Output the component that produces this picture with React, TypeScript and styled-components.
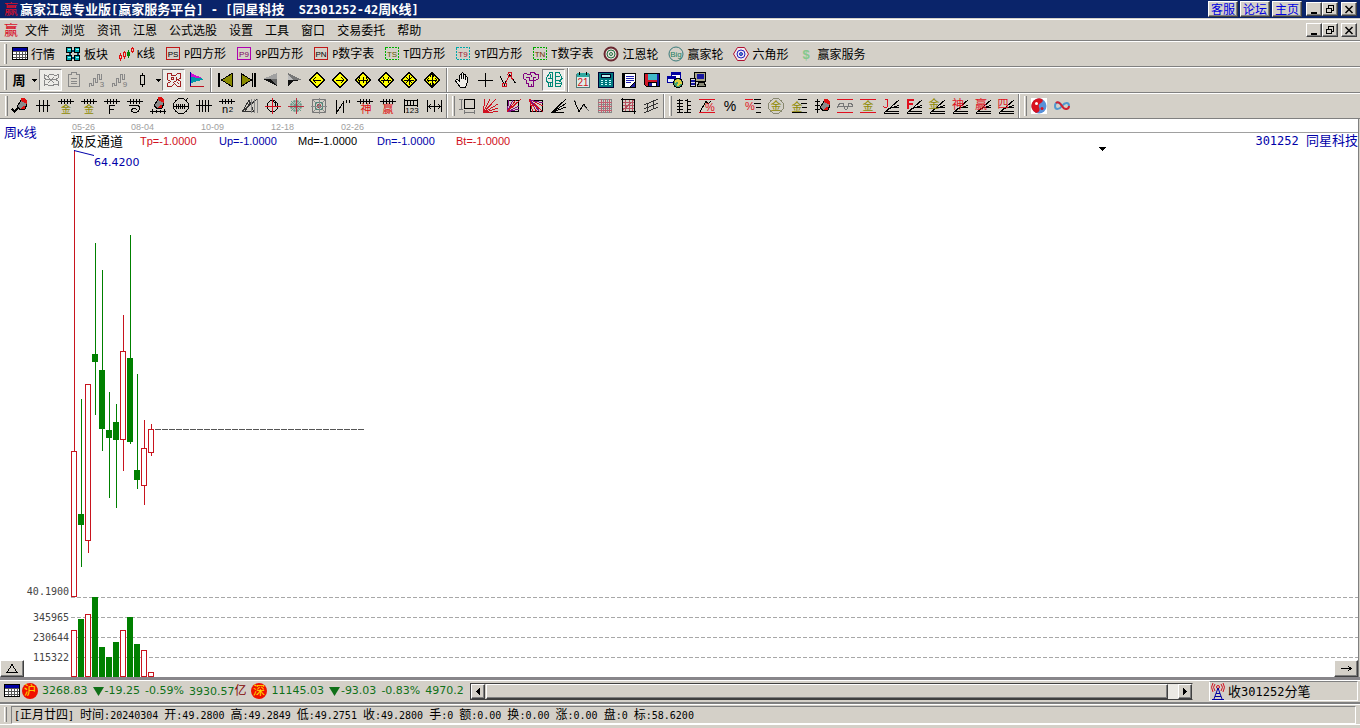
import React, { ReactNode } from "react";
import styled, { createGlobalStyle, css } from "styled-components";

const FACE = "#d4d0c8";
const SHADOW = "#808080";
const NAVY = "#0a246a";
const BLUE = "#0000a8";
const RED = "#c8141e";
const GREEN = "#008000";
const OLIVE = "#8f8a00";

const CJK = `"Noto Sans CJK SC", sans-serif`;
const MONO = `"DejaVu Sans Mono", "Noto Sans CJK SC", monospace`;

const GlobalStyle = createGlobalStyle`
  *, *::before { box-sizing: border-box; }
  body { margin: 0; background: ${FACE}; }
  button { font: inherit; color: inherit; }
`;

/* ---------- text ---------- */

const Half = styled.span<{ $size: number }>`
  font-family: ${MONO};
  font-size: ${(p) => p.$size}px;
`;

/* Sets half-width runs in the monospaced face, beside full-width characters. */
function Mixed({ text, size = 10 }: { text: string; size?: number }) {
  return (
    <>
      {text.split(/([\x20-\x7e]+)/).map((run, i) =>
        i % 2 ? (
          <Half key={i} $size={size}>
            {run}
          </Half>
        ) : (
          run
        )
      )}
    </>
  );
}

/* ---------- shared chrome ---------- */

const raised = css`
  background: ${FACE};
  border: 1px solid;
  border-color: #fff #404040 #404040 #fff;
  box-shadow: inset -1px -1px 0 ${SHADOW};
`;

const sunken = css`
  border: 1px solid;
  border-color: ${SHADOW} #fff #fff ${SHADOW};
`;

const Page = styled.div`
  min-height: 100vh;
  display: flex;
  flex-direction: column;
  background: ${FACE};
  font-family: ${CJK};
  font-size: 12px;
  line-height: 16px;
  color: #000;
  overflow: hidden;
`;

const TitleBar = styled.header`
  height: 18px;
  display: flex;
  align-items: center;
  padding: 0 3px 0 4px;
  background: ${NAVY};
  color: #fff;
`;

const TitleText = styled.h1`
  flex: 1;
  margin: 0;
  padding-left: 1px;
  font-size: 13px;
  line-height: 18px;
  font-weight: 700;
  white-space: pre;
  overflow: hidden;
`;

const TitleLinks = styled.nav`
  display: flex;
  gap: 2px;
  margin-right: 4px;
`;

const TitleLink = styled.a`
  ${raised}
  width: 30px;
  height: 16px;
  text-align: center;
  font-size: 12px;
  line-height: 14px;
  color: #0000e0;
  text-decoration: none;
`;

const WindowControls = styled.div`
  display: flex;
  gap: 0;
  & > :last-child {
    margin-left: 3px;
  }
`;

const WindowButton = styled.button`
  ${raised}
  width: 16px;
  height: 14px;
  padding: 0;
  display: grid;
  place-items: center;
`;

const Band = styled.div`
  display: flex;
  align-items: center;
  border-top: 1px solid #fff;
  border-bottom: 1px solid ${SHADOW};
`;

const MenuBar = styled(Band)`
  margin-top: 1px;
  height: 22px;
  padding: 0 3px 0 4px;
`;

const MenuItem = styled.button`
  border: 0;
  background: none;
  padding: 0 6px;
  line-height: 20px;
`;

const Spacer = styled.div`
  flex: 1;
`;

const ToolRow = styled(Band)`
  height: 26px;
`;

const Group = styled.div<{ $pad?: number; $last?: boolean }>`
  height: 24px;
  display: flex;
  align-items: center;
  padding: 0 1px 0 ${(p) => (p.$pad ?? 8) - 7}px;
  border-right: ${(p) => (p.$last ? "0" : `1px solid ${SHADOW}`)};
  &::before {
    content: "";
    width: 3px;
    height: 20px;
    margin: 0 0 0 4px;
    border-left: 1px solid #fff;
    border-right: 1px solid ${SHADOW};
  }
  & + & {
    box-shadow: inset 1px 0 0 #fff;
  }
`;

const Divider = styled.span<{ $width: number }>`
  width: ${(p) => p.$width}px;
  height: 24px;
  display: flex;
  justify-content: center;
  &::before {
    content: "";
    width: 2px;
    border-left: 1px solid ${SHADOW};
    border-right: 1px solid #fff;
  }
`;

const LabelButton = styled.button`
  border: 0;
  background: none;
  padding: 0 5px;
  display: flex;
  align-items: center;
  gap: 3px;
  white-space: nowrap;
`;

const IconButton = styled.button<{ $on?: boolean }>`
  width: 23px;
  height: 22px;
  padding: 0;
  display: grid;
  place-items: center;
  border: 1px solid transparent;
  background: none;
  ${(p) =>
    p.$on &&
    css`
      background: #ecebe7;
      border-color: ${SHADOW} #fff #fff ${SHADOW};
    `}
`;

const DropButton = styled.button<{ $width: number }>`
  width: ${(p) => p.$width}px;
  height: 22px;
  padding: 0;
  border: 0;
  background: none;
  display: grid;
  place-items: center;
`;

/* ---------- icon drawing ---------- */

const Svg = ({ children, w = 18, h = 18 }: { children: ReactNode; w?: number; h?: number }) => (
  <svg
    width={w}
    height={h}
    viewBox={`0 0 ${w} ${h}`}
    fill="none"
    stroke="#000"
    strokeWidth={1}
    shapeRendering="crispEdges"
    aria-hidden="true"
  >
    {children}
  </svg>
);

const L = ({ d, c = "#000", f = "none", w = 1 }: { d: string; c?: string; f?: string; w?: number }) => (
  <path d={d} stroke={c} fill={f} strokeWidth={w} />
);

const T = ({ x, y, s = 10, c = "#000", children, b }: { x: number; y: number; s?: number; c?: string; b?: boolean; children: string }) => (
  <text x={x} y={y} fontSize={s} fill={c} stroke="none" textAnchor="middle" fontWeight={b ? 700 : 400} fontFamily={`"Liberation Sans", ${CJK}`}>
    {children}
  </text>
);

const Caret = () => (
  <Svg w={5} h={3}>
    <path d="M0 0H5L2.5 3Z" fill="#000" stroke="none" />
  </Svg>
);

const Scale = () => <L d="M1 4.5H17M4.5 2V7M7.5 2V7M10.5 2V7M13.5 2V7" />;

const Pen = ({ x = 0, y = 0 }: { x?: number; y?: number }) => (
  <g transform={`translate(${x} ${y})`}>
    <path d="M10 2L13 3L16 8L15 12L10 13L6 11Z" fill="#8a8a8a" stroke="none" />
    <path d="M10 1H13L16 4V7L10 4Z" fill="#e01010" stroke="none" />
    <path d="M13 9L15 11L11 13L9 12Z" fill="#e01010" stroke="none" />
    <path d="M10 3L6 10L10 13L14 12L16 7" stroke="#000" />
  </g>
);

const Fan = () => <L d="M2 16L17 3M4 14.5H17M6 12L17 8.5M2 16.5H17M8 10.5H17" />;
const RedBars = () => <L c="#e01020" d="M1 2.5H17M1 15.5H17" />;

const Diamond = ({ children }: { children: ReactNode }) => (
  <Svg>
    <path d="M9 1.5L16.5 9L9 16.5L1.5 9Z" fill="#ffff00" stroke="#000" />
    {children}
  </Svg>
);

const Tag = ({ text, color, ink = "#000", dash }: { text: string; color: string; ink?: string; dash?: boolean }) => (
  <Svg w={16} h={16}>
    <rect x="1.5" y="1.5" width="13" height="12" stroke={color} strokeDasharray={dash ? "2 1" : undefined} />
    <T x={8} y={11} s={8} c={ink}>
      {text}
    </T>
  </Svg>
);

const TableIcon = () => (
  <Svg w={16} h={16}>
    <rect x="0.5" y="1.5" width="15" height="12" fill="#fff" />
    <rect x="1" y="2" width="14" height="3" fill="#0000a0" stroke="none" />
    <L d="M1 5.5H15M1 8.5H15M1 11H15M4.5 5V13M7.5 5V13M10.5 5V13M13 5V13" c="#555" />
  </Svg>
);

const BrandIcon = () => (
  <Svg w={15} h={16}>
    <T x={7} y={13} s={14} c="#d8102a">
      赢
    </T>
  </Svg>
);

/* ---------- toolbar contents ---------- */

const labelled: [string, ReactNode][] = [
  ["行情", <TableIcon />],
  [
    "板块",
    <Svg w={16} h={16}>
      {[
        [1.5, 1.5],
        [9.5, 1.5],
        [1.5, 9.5],
        [9.5, 9.5],
      ].map(([x, y]) => (
        <g key={`${x}-${y}`}>
          <rect x={x} y={y} width="5" height="5" fill="#00a8b0" />
          <L d={`M${x + 1} ${y + 2}H${x + 4}`} c="#8ff" />
        </g>
      ))}
      <L d="M7 4.5H9M7 12H9M4.5 7V9M12.5 7V9" c="#046" w={2} />
    </Svg>,
  ],
  [
    "K线",
    <Svg w={16} h={16}>
      <L c="#e01010" d="M2.5 7V15M6.5 5V13M14.5 1V7" />
      <rect x="1.5" y="9.5" width="2" height="3" fill={FACE} stroke="#e01010" />
      <rect x="5.5" y="6.5" width="2" height="4" fill={FACE} stroke="#e01010" />
      <L c={GREEN} d="M10.5 4V12M9.5 6V10M11.5 6V10" />
      <rect x="13.5" y="2.5" width="2" height="3" fill={FACE} stroke="#e01010" />
    </Svg>,
  ],
  ["P四方形", <Tag text="PS" color="#c01818" />],
  ["9P四方形", <Tag text="P9" color="#b000b0" ink="#800060" />],
  ["P数字表", <Tag text="PN" color="#c01818" />],
  ["T四方形", <Tag text="TS" color="#00b000" ink="#5a5a00" dash />],
  ["9T四方形", <Tag text="T9" color="#00a8a8" ink="#a01830" dash />],
  ["T数字表", <Tag text="TN" color="#00a800" ink="#703000" dash />],
  [
    "江恩轮",
    <Svg w={16} h={16}>
      <g shapeRendering="auto">
        <circle cx="8" cy="8" r="6.5" stroke="#6a2830" strokeWidth={2} fill="#e8e0dc" />
        <circle cx="8" cy="8" r="4" stroke="#207040" />
        <circle cx="8" cy="8" r="1.5" stroke="#207040" />
      </g>
    </Svg>,
  ],
  [
    "赢家轮",
    <Svg w={16} h={16}>
      <circle cx="8" cy="8" r="7" stroke="#3a7a7a" shapeRendering="auto" />
      <T x={8} y={11} s={8} c="#1a8060">
        Big
      </T>
    </Svg>,
  ],
  [
    "六角形",
    <Svg w={16} h={16}>
      <g shapeRendering="auto">
        <path d="M4.5 1.5H11.5L15.5 8L11.5 14.5H4.5L0.5 8Z" stroke="#b01030" fill="#f0e8f0" />
        <circle cx="8" cy="8" r="4" stroke="#2020c0" />
        <circle cx="8" cy="8" r="1.5" stroke="#2020c0" fill="#5aa0c0" />
      </g>
    </Svg>,
  ],
  [
    "赢家服务",
    <Svg w={16} h={16}>
      <T x={8} y={13} s={13} c="#84c88c" b>
        $
      </T>
    </Svg>,
  ],
];

type Tool = [string, ReactNode, boolean?];

const periodTools: Tool[] = [
  [
    "叠加",
    <Svg>
      <L c="#888" d="M2 3.5L6 5.5L8 3H11L13 5L16 3.5V7L14 8.5L16 10V14L13 13L11 14.5H7L5 13L2 14.5V10L4 8.5L2 7ZM4 8.5H14M6 6L12 12M12 6L6 12" />
    </Svg>,
    true,
  ],
  [
    "信息",
    <Svg>
      <L c="#888" d="M3.5 3.5H6.5V1.5H11.5V3.5H14.5V15.5H3.5ZM6 7.5H12M6 10.5H12M6 12.5H12" />
    </Svg>,
  ],
  [
    "三分",
    <Svg>
      <L c="#888" d="M1.5 16V12.5H3.5V14.5H5.5V7.5H7.5V11.5H9.5V3.5H11.5V8.5H13.5V3" />
      <T x={14} y={16} s={8} c="#777">
        3
      </T>
    </Svg>,
  ],
  [
    "九分",
    <Svg>
      <L c="#888" d="M1.5 16V12.5H3.5V14.5H5.5V7.5H7.5V11.5H9.5V3.5H11.5V8.5H13.5V3" />
      <T x={14} y={16} s={8} c="#777">
        9
      </T>
    </Svg>,
  ],
  [
    "K线样式",
    <Svg>
      <L d="M8.5 2V16" />
      <rect x="6.5" y="4.5" width="4" height="9" fill={FACE} />
    </Svg>,
  ],
];

const viewTools: Tool[] = [
  [
    "图形",
    <Svg>
      <L c="#a02020" d="M2.5 2.5H6.5V4.5H10.5L12.5 2.5H15.5V7.5L13 8.5L15.5 10.5V15.5H12.5L9.5 12.5L6.5 15.5H2.5V12.5L5.5 10.5L2.5 8.5ZM6.5 6.5H8.5V8.5H6.5ZM11.5 5.5V9.5L8.5 11.5M12.5 11.5L14 13" />
    </Svg>,
    true,
  ],
  [
    "旗帜",
    <Svg>
      <path d="M3 2L14 7L3 12Z" fill="#d010d0" stroke="none" />
      <path d="M3 6L17 8L3 12Z" fill="#0098a8" stroke="none" />
      <L c="#0000a0" d="M2.5 1V16" />
      <L c="#c01020" d="M2 15.5H16" />
    </Svg>,
  ],
];

const navTools: Tool[] = [
  ["首页", <Svg><path d="M5.5 9L16 2.5V15.5Z" fill="#8a8a00" /><L d="M3 2V16" w={2} /></Svg>],
  ["末页", <Svg><path d="M12.5 9L2 2.5V15.5Z" fill="#8a8a00" /><L d="M13.5 2V16" /><L d="M16 2V16" w={2} /></Svg>],
  ["后退", <Svg><path d="M1 8L15 2V8Z" fill="#a0a0a0" stroke="none" /><path d="M1 8H15V15Z" fill="#111" stroke="none" /><path d="M9 8H15V15Z" fill="#666" stroke="none" /></Svg>],
  ["前进", <Svg><path d="M17 9L3 2V9Z" fill="#777" stroke="none" /><path d="M17 9H3V16L8 10Z" fill="#111" stroke="none" /><path d="M3 4L8 9H3Z" fill="#bbb" stroke="none" /></Svg>],
  ["左移", <Diamond><L d="M5 9H13M8 6L5 9L8 12" /></Diamond>],
  ["右移", <Diamond><L d="M5 9H13M10 6L13 9L10 12" /></Diamond>],
  ["展开", <Diamond><L d="M4 9H14M6 6.5L4 9L6 11.5M12 6.5L14 9L12 11.5M9 6V12" /></Diamond>],
  ["收缩", <Diamond><L d="M4 9H14M6 6.5L8 9L6 11.5M12 6.5L10 9L12 11.5" /></Diamond>],
  ["缩小", <Diamond><L d="M4 9H14M9 4V14M6 6L12 12M12 6L6 12" /></Diamond>],
  ["放大", <Diamond><L d="M4 9H14M9 3V15M7 5.5L9 3L11 5.5M7 12.5L9 15L11 12.5M6 7L4 9L6 11M12 7L14 9L12 11" /></Diamond>],
];

const pointerTools: Tool[] = [
  [
    "手形",
    <Svg>
      <path d="M6.5 10V4.5Q7.5 2.5 8.5 4.5V8V2.5Q9.5 1 10.5 2.5V8V4Q11.5 3 12.5 4V9V6Q13.5 5 14.5 6.5V11L12.5 16.5H7.5L3 10.5Q2 8.5 4 8.5Z" fill="#efede8" />
    </Svg>,
  ],
  ["十字", <Svg><L d="M9.5 2V16M2 9.5H17" /></Svg>],
  [
    "折线",
    <Svg>
      <L d="M1 5L5.5 13.5L10.5 4L16.5 12" />
      <circle cx="5.5" cy="14" r="2" stroke="#d01020" />
      <circle cx="11" cy="3.5" r="2" stroke="#d01020" />
      <L c="#d01020" d="M7 11L10 5M12 6L14 9" />
    </Svg>,
  ],
  [
    "区域",
    <Svg>
      <L c="#800080" d="M1.5 3.5L4 2L6 3.5H8L9 1.5H12L13.5 3L16.5 4V7.5L13.5 9.5H11.5V15.5H6.5V12.5H4.5V9.5L1.5 7.5ZM4 6.5H7V9.5H11V6.5H14M9.5 12.5V15M9.5 4V6" />
    </Svg>,
  ],
  [
    "智能",
    <Svg>
      <L c="#008878" d="M3.5 15.5H7.5V1.5L4.5 2L2 6L1.5 10L3.5 12ZM10.5 1.5V15.5H15L17 12L14.5 10L17 7.5L14.5 2ZM3 7.5H7M2 11.5H7M11 5.5H15M11 9.5H14M11 12.5H16M5.5 3V7M5.5 11V15" />
    </Svg>,
    true,
  ],
];

const appTools: Tool[] = [
  [
    "日历",
    <Svg>
      <rect x="2.5" y="3.5" width="13" height="13" fill="#dfeeea" stroke="#507878" />
      <rect x="3" y="2" width="12" height="4" fill="#30a8a0" stroke="none" />
      <L d="M5.5 1V4M12.5 1V4" />
      <T x={9} y={15} s={10} c="#d01020">
        21
      </T>
    </Svg>,
  ],
  [
    "计算器",
    <Svg>
      <rect x="1.5" y="1.5" width="15" height="15" fill="#007880" stroke="#003" />
      <rect x="4.5" y="3.5" width="9" height="3" fill="#b8f0f0" stroke="#002" />
      {[9.5, 11.5, 13.5].map((y) => (
        <path key={y} d={`M4 ${y}H14`} stroke="#c8ffff" strokeDasharray="2 2" />
      ))}
    </Svg>,
  ],
  [
    "笔记",
    <Svg>
      <path d="M2.5 2.5H15.5V16.5H2.5Z" fill="#fff" />
      <L d="M4 3V16" w={2} />
      <L c="#2020b0" d="M6 5.5H14M6 7.5H14M6 9.5H14M6 11.5H11" />
      <path d="M15 11V16H10Z" fill="#2020a0" stroke="#000" />
    </Svg>,
  ],
  [
    "保存",
    <Svg>
      <path d="M1.5 2.5H16.5V15.5H3.5L1.5 13.5Z" fill="#d01828" />
      <rect x="5" y="3" width="9" height="6" fill="#40b8c8" stroke="none" />
      <rect x="5.5" y="11.5" width="8" height="4" fill="#fff" stroke="#000" />
      <path d="M6 12H9V15H6ZM14 3H16V15H14Z" fill="#1818a0" stroke="none" />
    </Svg>,
  ],
  [
    "网络",
    <Svg>
      <rect x="5.5" y="1.5" width="9" height="7" fill="#fff" stroke="#0000a0" />
      <rect x="1.5" y="5.5" width="8" height="6" fill="#e8f0ff" stroke="#0000a0" />
      <L c="#0000a0" d="M6 3H14M2 7H9" w={2} />
      <circle cx="12" cy="12" r="4.5" fill="#40a070" />
      <L c="#e0d040" d="M9 11L12 9L14 12L11 15M14 9L15 13" w={2} />
    </Svg>,
  ],
  [
    "终端",
    <Svg>
      <rect x="5.5" y="1.5" width="11" height="9" fill="#a8a488" />
      <rect x="8" y="3" width="7" height="5" fill="#1818a0" stroke="none" />
      <path d="M9.5 11.5H15.5L16.5 15.5H8.5Z" fill="#8a8a78" />
      <rect x="1.5" y="7.5" width="5" height="8" fill="#d8d8e8" />
      <L c="#1818a0" d="M2 10H6M2 13H6" w={2} />
    </Svg>,
  ],
];

const drawTools: Tool[] = [
  ["画笔", <Svg><Pen /><L d="M1 12L3.5 14.5L7 11" w={2} /></Svg>],
  ["等分", <Svg><L d="M2 8.5H16M5.5 3V15M9.5 3V15M13.5 3V15" /></Svg>],
  ["黄金尺", <Svg><Scale /><T x={9} y={16} c={OLIVE}>金</T></Svg>],
  ["黄金段", <Svg><Scale /><T x={9} y={16} c={OLIVE}>金</T></Svg>],
  ["斐波尺", <Svg><Scale /><L d="M6.5 17V8.5H12M7 12.5H11" /></Svg>],
  ["螺旋", <Svg><Scale /><L d="M3 8.5H12Q15 11 12.5 14Q9 17 6 14.5Q5 12 8 11Q11 11 10 13.5" /></Svg>],
  ["标尺", <Svg><Pen x={-1} y={-1} /><L d="M1 14.5H17M3.5 12V17M7.5 13V16M11.5 13V16M15.5 12V17" /></Svg>],
  ["圆尺", <Svg><circle cx="9" cy="9" r="7.5" /><L d="M1 9.5H17M4.5 7V12M6.5 7V12M8.5 7V12M10.5 7V12M12.5 7V12M14 3L16 1" /></Svg>],
  ["四分", <Svg><L d="M1 8.5H17M4.5 3V15M7.5 3V15M10.5 3V15M13.5 3V15" /></Svg>],
  ["平方", <Svg><Scale /><T x={7} y={16} s={11}>n</T><T x={13} y={15} s={8}>2</T></Svg>],
  ["三角", <Svg><L c="#333" d="M1.5 14.5L8 3L13 15ZM1.5 14.5L16 2M4 14L9 6" /><L c="#888" d="M10.5 2V16M13.5 2V16M16.5 2V16" /></Svg>],
  ["圆周", <Svg><circle cx="8.5" cy="9" r="5.5" /><L d="M8 5Q12 4 12 9" /><L c="#d01020" d="M1 9.5H17M8.5 1V17" /></Svg>],
  [
    "星形",
    <Svg>
      <g shapeRendering="auto">
        <circle cx="9" cy="9" r="5" stroke="#5a9a8a" />
        <L c="#6a9a8a" d="M4 4L14 14M14 4L4 14M3 7L15 11M15 7L3 11M7 3L11 15M11 3L7 15" />
      </g>
      <L c="#b83040" d="M1 9.5H17M9.5 1V17" />
    </Svg>,
  ],
  [
    "蛛网",
    <Svg>
      <rect x="2.5" y="2.5" width="13" height="13" stroke="#777" />
      <rect x="5.5" y="5.5" width="7" height="7" stroke="#4a8a7a" />
      <circle cx="9" cy="9" r="2" stroke="#b83040" />
      <L c="#888" d="M2 2L16 16M16 2L2 16M9.5 1V17M1 9.5H17" />
    </Svg>,
  ],
  ["波段", <Svg><L d="M3.5 3V16L10.5 5V16M13.5 3V6M16.5 3V6" /></Svg>],
  ["神奇尺", <Svg><Scale /><T x={10} y={16} s={11} c="#e01010">神</T></Svg>],
  ["赢家尺", <Svg><Scale /><T x={9} y={16} s={11} c="#e01010">赢</T></Svg>],
  ["数字尺", <Svg><L d="M2.5 2V16M2 3.5H16M15.5 2V10M2 8.5H16M5.5 4V8M8.5 4V8M11.5 4V8" /><T x={10} y={16} s={8}>123</T></Svg>],
  ["间距", <Svg><L d="M2.5 3V15M9.5 3V15M16.5 3V15M3 9.5H16M6 7L4 9.5L6 12M13 7L15 9.5L13 12" /></Svg>],
];

const gannTools: Tool[] = [
  ["量度框", <Svg><rect x="6.5" y="2.5" width="10" height="9" /><L c="#777" d="M1 2.5H5M1 12.5H5M3.5 3V12M6.5 13V17M16.5 13V17M7 15.5H16" /></Svg>],
  ["扇形线", <Svg><L c="#d01020" d="M2 16L4 2M2 16L9 2M2 16L15 2M2 16L17 7M2 16L17 11M2 16L17 14.5" /></Svg>],
  ["江恩箱", <Svg><rect x="3.5" y="3.5" width="11" height="11" /><L c="#801080" d="M3 15L5 3M3 15L9 3M3 15L15 9M3 15L15 12" /><L c="#d01020" d="M3 15L17 2M3 15L12 3" /></Svg>],
  ["下降箱", <Svg><rect x="3.5" y="3.5" width="12" height="11" /><L c="#d01020" d="M2 2L16 15M2 2L10 15M2 2L6 15M2 2L16 9" /><L c="#801080" d="M3 3L13 15M3 3L16 6" /></Svg>],
  ["速度线", <Svg><L d="M1.5 15.5L16 2M1.5 15.5L16 6.5M1.5 15.5L16 10M2 15.5H14" /></Svg>],
  ["波浪", <Svg><L d="M1 3L6 14.5L11 7L14 12" /><L c="#666" d="M1 3L3 5M10 8L16 14" /></Svg>],
  ["网格", <Svg><L c="#888" d="M2.5 2V16M7.5 2V16M11.5 2V16M15.5 2V16M2 2.5H16M2 7.5H16M2 11.5H16M2 15.5H16" /><L c="#c06070" d="M5.5 2V16M9.5 2V16M13.5 2V16M2 5.5H16M2 9.5H16M2 13.5H16" /></Svg>],
  ["坐标格", <Svg><L c="#b85060" d="M6.5 3V14M10.5 3V14M13.5 3V14M4 5.5H16M4 8.5H16M4 11.5H16M3 14L15 3" /><L d="M2 2.5H16M3.5 1V15M3 14.5H17M15.5 3V17" /></Svg>],
  ["平行线", <Svg><L d="M2 8L16 2M2 12L16 6M2 16L16 10M5.5 6V15M11.5 3V12" c="#333" /></Svg>],
];

const ratioTools: Tool[] = [
  ["刻度", <Svg><L d="M4.5 2V16M12.5 2V16M2 3.5H8M2 6.5H8M2 9.5H8M2 12.5H8M2 15.5H8M10 3.5H12M13 4.5H16M13 8.5H16M13 12.5H16M9 15.5H16" /></Svg>],
  ["百分波", <Svg><RedBars /><L d="M2 15L8 4L10 7L13 4" /><T x={12} y={14} s={11} c="#e01020">%</T></Svg>],
  ["百分比", <Svg><T x={9} y={14} s={14}>%</T></Svg>],
  ["百分线", <Svg><L c="#e01020" d="M1 2.5H9" /><L d="M10 2.5H17M10 6.5H17M12 10.5H17M12 15.5H17" /><T x={6} y={13} s={11} c="#e01020">%</T></Svg>],
  ["黄金圆", <Svg><circle cx="9" cy="9" r="7.5" stroke="#888870" /><T x={9} y={13} s={11} c={OLIVE}>金</T></Svg>],
  ["黄金线", <Svg><L d="M8 2.5H17M11 6.5H17M12 10.5H17M2 15.5H17" /><T x={7} y={14} s={11} c={OLIVE}>金</T></Svg>],
  ["刻度笔", <Svg><L d="M4.5 2V16M2 4.5H7M2 8.5H7M2 12.5H7" /><Pen x={1} y={1} /></Svg>],
  ["震荡线", <Svg><RedBars /><L c="#777" d="M1 11L4 6L7 6L9 12H11L13 6H15L17 9M1 9.5H17" /></Svg>],
  ["黄金带", <Svg><RedBars /><T x={9} y={13} s={11} c={OLIVE}>金</T></Svg>],
  ["J线", <Svg><Fan /><L c="#e01020" d="M1.5 9.5L2.5 10.5H4.5L5.5 9.5V2.5H3" /></Svg>],
  ["F线", <Svg><Fan /><L c="#e01020" d="M3 12V3H9M4 7H8" w={2} /></Svg>],
  ["金线", <Svg><Fan /><T x={6} y={11} s={11} c={OLIVE}>金</T></Svg>],
  ["神线", <Svg><Fan /><T x={7} y={12} s={12} c="#e01020">神</T></Svg>],
  ["赢线", <Svg><Fan /><T x={7} y={12} s={12} c="#e01020">赢</T></Svg>],
  ["四线", <Svg><Fan /><T x={6} y={11} s={11} c="#e01020">四</T></Svg>],
];

const extraTools: Tool[] = [
  [
    "太极",
    <Svg>
      <rect x="1" y="1" width="16" height="16" fill="#fff" stroke="none" />
      <g shapeRendering="auto" stroke="none">
        <circle cx="9" cy="9" r="7.5" fill="#5890d8" />
        <path d="M12 2A7.5 7.5 0 1 0 6 16Q11 15 9 10Q8 7 11 6Q14 4 12 2Z" fill="#d81020" />
        <circle cx="6.5" cy="6.5" r="1.5" fill="#fff" />
        <circle cx="12" cy="11.5" r="1.5" fill="#d81020" />
      </g>
    </Svg>,
  ],
  [
    "无穷",
    <Svg>
      <g shapeRendering="auto" strokeWidth={2}>
        <path d="M9 9C6 4 2 5 2 9C2 13 6 13 9 9C12 5 16 5 16 9" stroke="#5098d0" />
        <path d="M3 6C5 4 7 6 9 9C12 14 16 12 16 9" stroke="#d02030" />
      </g>
    </Svg>,
  ],
];

const Tools = ({ items }: { items: Tool[] }) => (
  <>
    {items.map(([name, icon, on]) => (
      <IconButton key={name} type="button" aria-label={name} $on={on}>
        {icon}
      </IconButton>
    ))}
  </>
);

function Controls() {
  return (
    <WindowControls>
      <WindowButton type="button" aria-label="最小化">
        <Svg w={10} h={9}><L d="M2 8H8" w={2} /></Svg>
      </WindowButton>
      <WindowButton type="button" aria-label="还原">
        <Svg w={10} h={10}><L d="M3.5 4V1H8.5V6H6.5M3 1.5H9M1.5 4V8.5H6.5V4M1 4.5H7" /></Svg>
      </WindowButton>
      <WindowButton type="button" aria-label="关闭">
        <Svg w={10} h={9}><g shapeRendering="auto"><L d="M1.5 1L8.5 8M8.5 1L1.5 8" w={1.5} /></g></Svg>
      </WindowButton>
    </WindowControls>
  );
}

/* ---------- chart ---------- */

const ChartPanel = styled.main`
  position: relative;
  flex: 1;
  display: flex;
  margin-right: 1px;
  background: #fff;
  border-right: 1px solid ${SHADOW};
`;

const Gutter = styled.div`
  width: 71px;
  display: flex;
  flex-direction: column;
  align-items: flex-end;
  padding: 5px 2px 9px 4px;
  font-family: ${MONO};
  font-size: 10px;
  line-height: 20px;
  color: #444;
`;

const PeriodName = styled.div`
  align-self: flex-start;
  flex: 1;
  font-family: ${CJK};
  font-size: 13px;
  line-height: 16px;
  color: ${BLUE};
`;

const PriceLabel = styled.div`
  margin-bottom: 6px;
`;

const Plot = styled.div`
  flex: 1;
  min-width: 0;
  display: flex;
  flex-direction: column;
`;

const DateRow = styled.div`
  display: flex;
  height: 14px;
  padding: 3px 0 0 1px;
  border-bottom: 1px solid #a0a0a0;
  font-family: "Liberation Sans", sans-serif;
  font-size: 9px;
  line-height: 10px;
  color: #a0a0a0;
`;

const DateLabel = styled.span<{ $width: number }>`
  width: ${(p) => p.$width}px;
`;

const LegendRow = styled.div`
  display: flex;
  align-items: center;
  height: 15px;
  font-family: "Liberation Sans", "Noto Sans CJK SC", sans-serif;
  font-size: 11px;
`;

const LegendName = styled.span`
  width: 69px;
  font-family: ${CJK};
  font-size: 13px;
`;

const LegendValue = styled.span<{ $color: string }>`
  width: 79px;
  color: ${(p) => p.$color};
`;

const StockName = styled.span`
  margin-left: auto;
  font-family: ${CJK};
  font-size: 13px;
  color: ${BLUE};
  white-space: pre;
`;

const Menu = styled.button`
  position: absolute;
  right: 250px;
  top: 26px;
  width: 11px;
  height: 8px;
  padding: 0;
  border: 0;
  background: none;
  display: grid;
  place-items: center;
`;

const PlotSvg = styled.svg`
  display: block;
  width: 100%;
  height: 527px;
  margin-top: auto;
`;

const CornerButton = styled.button<{ $side: "left" | "right" }>`
  ${raised}
  position: absolute;
  bottom: 0;
  ${(p) => p.$side}: 0;
  width: 24px;
  height: 17px;
  padding: 0;
  display: grid;
  place-items: center;
`;

/* wick and body edges in plot pixels; vol is the top edge of the volume bar */
const bars = [
  { up: true, high: 150, top: 451, bottom: 596, low: 596, vol: 630 },
  { up: false, high: 399, top: 514, bottom: 525, low: 567, vol: 619 },
  { up: true, high: 384, top: 384, bottom: 540, low: 553, vol: 614 },
  { up: false, high: 243, top: 354, bottom: 362, low: 415, vol: 597 },
  { up: false, high: 270, top: 370, bottom: 429, low: 451, vol: 647 },
  { up: false, high: 392, top: 430, bottom: 438, low: 498, vol: 657 },
  { up: false, high: 404, top: 422, bottom: 440, low: 508, vol: 642 },
  { up: true, high: 315, top: 351, bottom: 439, low: 471, vol: 630 },
  { up: false, high: 235, top: 358, bottom: 442, low: 444, vol: 617 },
  { up: false, high: 374, top: 470, bottom: 480, low: 489, vol: 644 },
  { up: true, high: 420, top: 448, bottom: 485, low: 505, vol: 650 },
  { up: true, high: 424, top: 429, bottom: 452, low: 456, vol: 672 },
];

function Body({ x, y, y2, up }: { x: number; y: number; y2: number; up: boolean }) {
  return up ? (
    <rect x={x + 0.5} y={y + 0.5} width={5} height={y2 - y} fill="#fff" stroke={RED} />
  ) : (
    <rect x={x} y={y} width={6} height={y2 - y} fill={GREEN} />
  );
}

function Candles() {
  return (
    <PlotSvg role="img" aria-label="周K线图">
      <g transform="translate(-71 -150)">
        {[597, 617, 637, 657].map((y) => (
          <svg key={y} x={71} y={y} width="100%" height={1}>
            <line x1="0" x2="100%" y1="0.5" y2="0.5" stroke="#a8a8a8" strokeDasharray="4 2" />
          </svg>
        ))}
        {bars.map((b, i) => {
          const x = 71 + i * 7;
          return (
            <g key={x}>
              <line x1={x + 3.5} x2={x + 3.5} y1={b.high} y2={b.low} stroke={b.up ? RED : GREEN} />
              <Body x={x} y={b.top} y2={b.bottom} up={b.up} />
              <Body x={x} y={b.vol} y2={b.up ? 676 : 677} up={b.up} />
            </g>
          );
        })}
        <line x1="155" x2="364" y1="429.5" y2="429.5" stroke="#555" strokeDasharray="6 1" />
        <path d="M74 150.5L94 155.5" stroke={BLUE} fill="none" />
        <text x="94" y="166" fill={BLUE} fontSize="11" fontFamily='"DejaVu Sans", sans-serif'>
          64.4200
        </text>
      </g>
    </PlotSvg>
  );
}

/* ---------- bottom bars ---------- */

const QuoteBar = styled.div`
  display: flex;
  align-items: center;
  height: 27px;
  padding: 1px 2px 1px;
  border-top: 3px solid #88868a;
  border-bottom: 2px solid ${SHADOW};
  box-shadow: inset 0 1px 0 #fff;
`;

const Quotes = styled.div`
  width: 466px;
  margin-right: 2px;
  height: 20px;
  display: flex;
  align-items: center;
  gap: 1px;
  padding-left: 2px;
  overflow: hidden;
  & > svg {
    flex: none;
  }
`;

const Quote = styled.span`
  display: flex;
  align-items: center;
  gap: 5px;
  padding: 0 3px 0 2px;
  white-space: nowrap;
  font-family: "DejaVu Sans", "Noto Sans CJK SC", sans-serif;
  font-size: 11px;
  color: #107018;
`;

const Change = styled.span`
  display: flex;
  align-items: center;
`;

const Unit = styled.span`
  font-size: 12px;
  color: #800000;
`;

const Scroll = styled.div`
  flex: 1;
  display: flex;
  height: 17px;
  border: 1px solid;
  border-color: #404040 transparent #404040 #404040;
`;

const ScrollButton = styled.button`
  ${raised}
  width: 14px;
  padding: 0;
  display: grid;
  place-items: center;
`;

const Thumb = styled.div`
  ${raised}
  flex: 1;
  margin-left: 1px;
`;

const Track = styled.div`
  width: 10px;
  background: #ebe9e4;
`;

const Feed = styled.div`
  ${sunken}
  border-left-color: #fff;
  width: 149px;
  height: 20px;
  margin-left: 16px;
  padding-left: 1px;
  display: flex;
  align-items: center;
  gap: 3px;
  font-size: 13px;
`;

const StatusBar = styled.footer`
  display: flex;
  align-items: center;
  height: 21px;
  padding: 0 4px;
  border-top: 1px solid #fff;
  border-bottom: 1px solid #fff;
  margin-bottom: 3px;
  &::before {
    content: "";
    width: 3px;
    height: 15px;
    margin-right: 4px;
    border-left: 1px solid #fff;
    border-right: 1px solid ${SHADOW};
  }
`;

const StatusText = styled.div`
  ${sunken}
  flex: 1;
  height: 18px;
  padding-left: 2px;
  line-height: 14px;
  white-space: pre;
  overflow: hidden;
`;

const Badge = ({ text }: { text: string }) => (
  <Svg>
    <circle cx="9" cy="9" r="8" fill="#f01000" stroke="none" shapeRendering="auto" />
    <T x={9} y={13} s={12} c="#ffe000">
      {text}
    </T>
  </Svg>
);

const Down = () => (
  <Svg w={12} h={9}>
    <path d="M0 0H11L5.5 9Z" fill="#107018" stroke="none" shapeRendering="auto" />
  </Svg>
);

function Index({ last, change, rate, amount, unit }: { last: string; change: string; rate: string; amount: string; unit?: string }) {
  return (
    <Quote>
      <span>{last}</span>
      <Change>
        <Down />
        {change}
      </Change>
      <span>{rate}</span>
      <span>
        {amount}
        {unit && <Unit>{unit}</Unit>}
      </span>
    </Quote>
  );
}

const menus = ["文件", "浏览", "资讯", "江恩", "公式选股", "设置", "工具", "窗口", "交易委托", "帮助"];

const dates: [string, number][] = [
  ["05-26", 59],
  ["08-04", 70],
  ["10-09", 70],
  ["12-18", 70],
  ["02-26", 70],
];

const legend: [string, string][] = [
  ["Tp=-1.0000", "#d01020"],
  ["Up=-1.0000", BLUE],
  ["Md=-1.0000", "#000"],
  ["Dn=-1.0000", BLUE],
  ["Bt=-1.0000", "#d01020"],
];

export default function App() {
  return (
    <Page>
      <GlobalStyle />
      <TitleBar>
        <BrandIcon />
        <TitleText>
          <Mixed size={12} text="赢家江恩专业版[赢家服务平台] - [同星科技  SZ301252-42周K线]" />
        </TitleText>
        <TitleLinks>
          <TitleLink href="#service">客服</TitleLink>
          <TitleLink href="#forum">论坛</TitleLink>
          <TitleLink href="#home">主页</TitleLink>
        </TitleLinks>
        <Controls />
      </TitleBar>

      <MenuBar>
        <BrandIcon />
        {menus.map((m) => (
          <MenuItem key={m} type="button">
            {m}
          </MenuItem>
        ))}
        <Spacer />
        <Controls />
      </MenuBar>

      <ToolRow>
        <Group $pad={7} $last>
          {labelled.map(([name, icon]) => (
            <LabelButton key={name} type="button">
              {icon}
              <span>
                <Mixed text={name} />
              </span>
            </LabelButton>
          ))}
        </Group>
      </ToolRow>

      <ToolRow>
        <Group $pad={7} $last>
          <IconButton type="button" aria-label="周期">
            <Svg>
              <T x={9} y={14} s={13} b>
                周
              </T>
            </Svg>
          </IconButton>
          <DropButton type="button" aria-label="选择周期" $width={9}>
            <Caret />
          </DropButton>
          <Tools items={periodTools} />
          <DropButton type="button" aria-label="选择样式" $width={8}>
            <Caret />
          </DropButton>
          <Tools items={viewTools} />
          <Divider $width={5} />
          <Tools items={navTools} />
          <Divider $width={7} />
          <Tools items={pointerTools} />
          <Divider $width={6} />
          <Tools items={appTools} />
        </Group>
      </ToolRow>

      <ToolRow>
        {[drawTools, gannTools, ratioTools, extraTools].map((items, i) => (
          <Group key={i} $last={i === 3}>
            <Tools items={items} />
          </Group>
        ))}
      </ToolRow>

      <ChartPanel>
        <Gutter>
          <PeriodName>
            <Mixed size={11} text="周K线" />
          </PeriodName>
          <PriceLabel>40.1900</PriceLabel>
          <div>345965</div>
          <div>230644</div>
          <div>115322</div>
        </Gutter>
        <Plot>
          <DateRow>
            {dates.map(([d, w]) => (
              <DateLabel key={d} $width={w}>
                {d}
              </DateLabel>
            ))}
          </DateRow>
          <LegendRow>
            <LegendName>极反通道</LegendName>
            {legend.map(([v, c]) => (
              <LegendValue key={v} $color={c}>
                {v}
              </LegendValue>
            ))}
            <StockName>
              <Mixed size={12} text="301252 " />
              同星科技
            </StockName>
          </LegendRow>
          <Candles />
        </Plot>
        <Menu type="button" aria-label="图表菜单">
          <Svg w={7} h={4}>
            <path d="M0 0H7L3.5 4Z" fill="#000" stroke="none" />
          </Svg>
        </Menu>
        <CornerButton type="button" aria-label="展开指标" $side="left">
          <Svg w={12} h={11}>
            <L d="M1 9.5L6 1.5L11 9.5Z" />
          </Svg>
        </CornerButton>
        <CornerButton type="button" aria-label="向右" $side="right">
          <Svg w={12} h={9}>
            <L d="M1 4.5H11M8 2L11 4.5L8 7" />
          </Svg>
        </CornerButton>
      </ChartPanel>

      <QuoteBar>
        <Quotes>
          <TableIcon />
          <Badge text="沪" />
          <Index last="3268.83" change="-19.25" rate="-0.59%" amount="3930.57" unit="亿" />
          <Badge text="深" />
          <Index last="11145.03" change="-93.03" rate="-0.83%" amount="4970.2" />
        </Quotes>
        <Scroll>
          <ScrollButton type="button" aria-label="向左滚动">
            <Svg w={4} h={7}>
              <path d="M4 0V7L0 3.5Z" fill="#000" stroke="none" />
            </Svg>
          </ScrollButton>
          <Thumb />
          <Track />
          <ScrollButton type="button" aria-label="向右滚动">
            <Svg w={4} h={7}>
              <path d="M0 0V7L4 3.5Z" fill="#000" stroke="none" />
            </Svg>
          </ScrollButton>
        </Scroll>
        <Feed>
          <Svg w={14} h={17}>
            <g shapeRendering="auto">
              <L c="#d01020" d="M4 1Q1 4 4 8M10 1Q13 4 10 8M2 0Q-1 4 2 9M12 0Q15 4 12 9" />
              <circle cx="7" cy="4" r="1.5" stroke="#d01020" />
              <L c="#0000a0" d="M7 5L3 16M7 5L11 16M5 10.5H9M4 13.5H10M1 16.5H13" />
            </g>
          </Svg>
          <span>
            <Mixed size={12} text="收301252分笔" />
          </span>
        </Feed>
      </QuoteBar>

      <StatusBar>
        <StatusText>
          <Mixed text="[正月廿四] 时间:20240304 开:49.2800 高:49.2849 低:49.2751 收:49.2800 手:0 额:0.00 换:0.00 涨:0.00 盘:0 标:58.6200" />
        </StatusText>
      </StatusBar>
    </Page>
  );
}
